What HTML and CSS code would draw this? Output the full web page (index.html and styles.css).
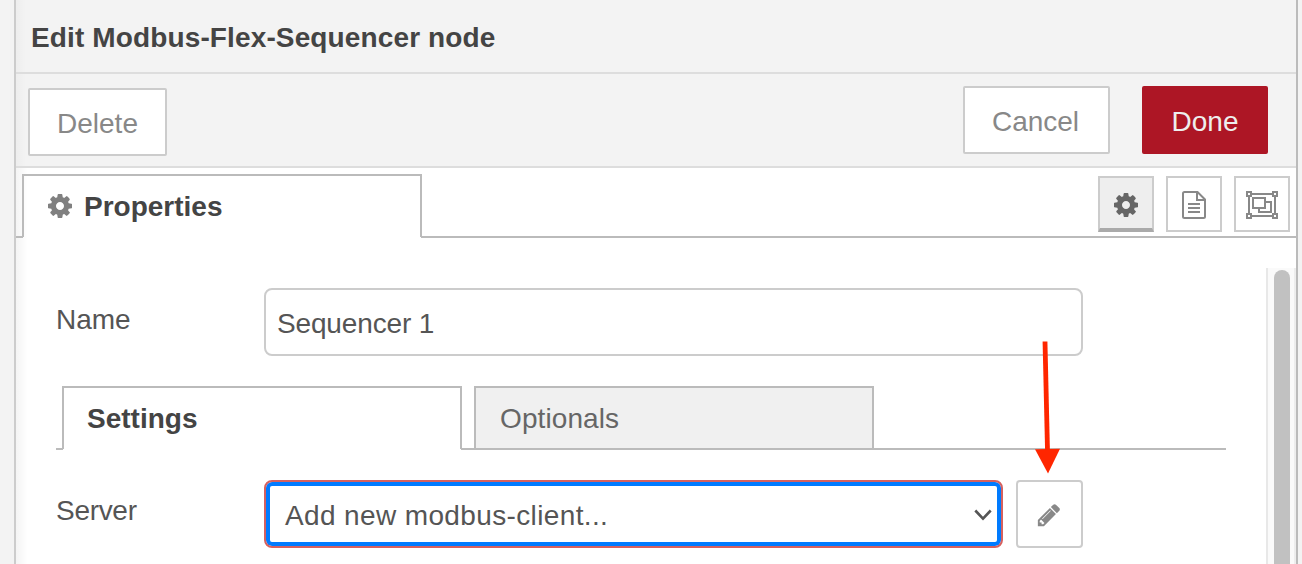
FILE: index.html
```html
<!DOCTYPE html>
<html lang="en">
<head>
<meta charset="utf-8">
<title>Edit Modbus-Flex-Sequencer node</title>
<link rel="stylesheet" href="styles.css">
</head>
<body>
<svg class="defs" width="0" height="0" aria-hidden="true">
  <symbol id="cog" viewBox="0 0 1792 1792"><path d="M1152 896q0-106-75-181t-181-75-181 75-75 181 75 181 181 75 181-75 75-181zm512-109v222q0 12-8 23t-20 13l-185 28q-19 54-39 91 35 50 107 138 10 12 10 25t-9 23q-27 37-99 108t-94 71q-12 0-26-9l-138-108q-44 23-91 38-16 136-29 186-7 28-36 28h-222q-14 0-24.5-8.5t-11.5-21.5l-28-184q-49-16-90-37l-141 107q-10 9-25 9-14 0-25-11-126-114-165-168-7-10-7-23 0-12 8-23 15-21 51-66.5t54-70.5q-27-50-41-99l-183-27q-13-2-21-12.5t-8-23.5v-222q0-12 8-23t19-13l186-28q14-46 39-92-40-57-107-138-10-12-10-24 0-10 9-23 26-36 98.5-107.5t94.5-71.5q13 0 26 10l138 107q44-23 91-38 16-136 29-186 7-28 36-28h222q14 0 24.5 8.5t11.5 21.5l28 184q49 16 90 37l142-107q9-9 24-9 13 0 25 10 129 119 165 170 7 8 7 22 0 12-8 23-15 21-51 66.5t-54 70.5q26 50 41 98l183 28q13 2 21 12.5t8 23.5z"/></symbol>
</svg>
<main class="tray">
  <header class="header"><h1 class="title">Edit Modbus-Flex-Sequencer node</h1></header>
  <div class="toolbar">
    <button class="btn delete">Delete</button>
    <div class="actions">
      <button class="btn cancel">Cancel</button>
      <button class="btn primary">Done</button>
    </div>
  </div>
  <nav class="tabs">
    <div class="tabs-lead"></div>
    <div class="tab active"><svg class="tab-icon"><use href="#cog"/></svg><span>Properties</span></div>
    <div class="tabs-rest">
      <button class="icon-btn selected"><svg width="28" height="28"><use href="#cog"/></svg></button>
      <button class="icon-btn"><svg width="24" height="28" viewBox="0 0 24 28" fill="none" stroke="currentColor" stroke-width="2"><path d="M2.5 1H15.5L23 8.5V25.5Q23 27 21.5 27H2.5Q1 27 1 25.5V2.5Q1 1 2.5 1ZM15 1V9H23M6 13H18M6 17H18M6 21H18"/></svg></button>
      <button class="icon-btn"><svg width="32" height="28" viewBox="0 0 32 28" fill="none" stroke="currentColor" stroke-width="2"><path d="M6 3H26M6 25H26M3 6V22M29 6V22M1 1H5V5H1ZM27 1H31V5H27ZM1 23H5V27H1ZM27 23H31V27H27ZM7 7H19V17H7ZM19 11H25V21H13V17"/></svg></button>
    </div>
  </nav>
  <div class="body">
    <form class="form">
      <div class="row">
        <label class="label name">Name</label>
        <div class="input"><span>Sequencer 1</span></div>
      </div>
      <div class="tabs inner">
        <div class="tabs-lead"></div>
        <div class="tab active"><span>Settings</span></div>
        <div class="tabs-gap"></div>
        <div class="tab idle"><span>Optionals</span></div>
        <div class="tabs-rest"></div>
      </div>
      <div class="row server">
        <label class="label">Server</label>
        <div class="select"><span>Add new modbus-client...</span>
          <svg width="18" height="12" viewBox="0 0 18 12" fill="none" stroke="#555" stroke-width="2.6"><path d="M1.3 1.5L9 9.6L16.7 1.5"/></svg>
        </div>
        <div class="edit"><svg width="26" height="26" viewBox="0 0 1792 1792" fill="currentColor"><path d="M491 1536l91-91-235-235-91 91v107h128v128h107zm523-928q0-22-22-22-10 0-17 7l-542 542q-7 7-7 17 0 22 22 22 10 0 17-7l542-542q7-7 7-17zm-54-192l416 416-832 832h-416v-416zm683 96q0 53-37 90l-166 166-416-416 166-165q36-38 90-38 53 0 91 38l235 234q37 39 37 91z"/></svg></div>
      </div>
    </form>
    <div class="scrollbar"><div class="thumb"></div></div>
  </div>
  <svg class="arrow" width="26" height="134" viewBox="0 0 26 134"><path d="M10 1.5L12.5 111" stroke="#ff2600" stroke-width="4.8"/><path d="M0 109.3L25 108.8L13 133.5Z" fill="#ff2600"/></svg>
</main>
</body>
</html>
```
FILE: styles.css
```css
* { box-sizing: border-box; }
body {
  margin: 0;
  width: 1302px;
  height: 564px;
  overflow: hidden;
  padding: 0 4px 0 14px;
  background: #f3f3f3;
  font: 28px/34px "Liberation Sans", Arial, sans-serif;
  color: #555;
}
.defs { position: absolute; }
.tray {
  position: relative;
  height: 564px;
  display: flex;
  flex-direction: column;
  border-left: 2px solid #ccc;
  border-right: 2px solid #bbb;
  background: linear-gradient(90deg, rgba(0, 0, 0, .045), transparent 12px) #fff;
}
.header {
  height: 74px;
  border-bottom: 2px solid #ddd;
  padding: 21px 0 0 15px;
  background: linear-gradient(90deg, rgba(0, 0, 0, .025), transparent 10px) #f3f3f3;
}
.title { margin: 0; font-size: 28px; line-height: 34px; letter-spacing: .13px; color: #444; white-space: nowrap; }
.toolbar {
  height: 94px;
  display: flex;
  justify-content: space-between;
  align-items: flex-start;
  padding: 12px 28px 0 12px;
  border-bottom: 2px solid #ddd;
  background: linear-gradient(90deg, rgba(0, 0, 0, .025), transparent 10px) #f3f3f3;
}
.actions { display: flex; gap: 32px; }
.btn {
  height: 68px;
  padding: 4px 0 0;
  border: 2px solid #ccc;
  border-radius: 2px;
  background: #fff;
  color: #888;
  font: inherit;
}
.delete { width: 139px; margin-top: 2px; }
.cancel { width: 147px; padding-right: 2px; }
.primary { width: 126px; border-color: #ad1625; background: #ad1625; color: #eee; }
.tabs { display: flex; height: 70px; padding-top: 6px; }
.tabs-lead { width: 7px; margin-right: -1px; border-bottom: 2px solid #bbb; }
.tabs-gap { width: 13px; margin-left: -1px; border-bottom: 2px solid #bbb; }
.tab {
  width: 400px;
  height: 63px;
  display: flex;
  align-items: center;
  border: 2px solid #bbb;
  border-bottom: 0;
  padding-left: 24px;
}
.tab.active { font-weight: bold; color: #444; }
.tab.idle { height: 64px; padding-top: 2px; border-bottom: 2px solid #bbb; background: #f0f0f0; color: #666; }
.tab-icon { width: 28px; height: 28px; margin: -2px 10px 0 -2px; fill: #808080; }
.inner .tab span { letter-spacing: .1px; }
.inner .tab.active span { margin-left: -1px; letter-spacing: 0; }
.tabs-rest {
  flex: 1;
  margin-left: -1px;
  display: flex;
  justify-content: flex-end;
  gap: 12px;
  padding: 2px 6px 0 0;
  border-bottom: 2px solid #bbb;
}
.icon-btn {
  width: 56px;
  height: 56px;
  padding: 0;
  display: flex;
  align-items: center;
  justify-content: center;
  border: 2px solid #ccc;
  background: #fff;
  color: #888;
}
.icon-btn svg { margin-top: 2px; }
.icon-btn.selected { border-bottom: 4px solid #aaa; background: #eee; }
.icon-btn.selected svg { margin-top: 4px; fill: #666; }
.body { flex: 1; min-height: 0; display: flex; justify-content: space-between; padding-top: 30px; }
.form { width: 1210px; padding: 20px 0 0 40px; }
.row { display: flex; align-items: flex-start; }
.label { width: 208px; padding-top: 14px; letter-spacing: -.3px; }
.name { padding-top: 15px; letter-spacing: 0; }
.input {
  width: 819px;
  height: 68px;
  display: flex;
  align-items: center;
  padding: 4px 0 0 11px;
  border: 2px solid #ccc;
  border-radius: 8px;
  background: #fff;
  letter-spacing: -.15px;
}
.inner { height: 64px; margin-top: 30px; padding-top: 0; }
.server { margin-top: 30px; }
.select {
  width: 739px;
  height: 68px;
  display: flex;
  align-items: center;
  justify-content: space-between;
  padding: 2px 9px 0 19px;
  border: 2px solid #d6615f;
  border-radius: 8px;
  box-shadow: inset 0 0 0 4px #007bff;
  background: #fff;
  letter-spacing: .37px;
}
.select span { padding-top: 2px; }
.edit {
  width: 67px;
  height: 68px;
  margin-left: 13px;
  padding: 2px 2px 0 0;
  display: flex;
  align-items: center;
  justify-content: center;
  border: 2px solid #ccc;
  border-radius: 4px;
  background: #fff;
  color: #888;
}
.scrollbar {
  width: 30px;
  padding: 2px 0 0 6px;
  border-left: 2px solid #e8e8e8;
  border-right: 2px solid #ededed;
  background: #fafafa;
}
.thumb { width: 16px; height: 100%; border-radius: 8px 8px 0 0; background: #c1c1c1; }
.arrow { position: absolute; left: 1019px; top: 340px; }
```
